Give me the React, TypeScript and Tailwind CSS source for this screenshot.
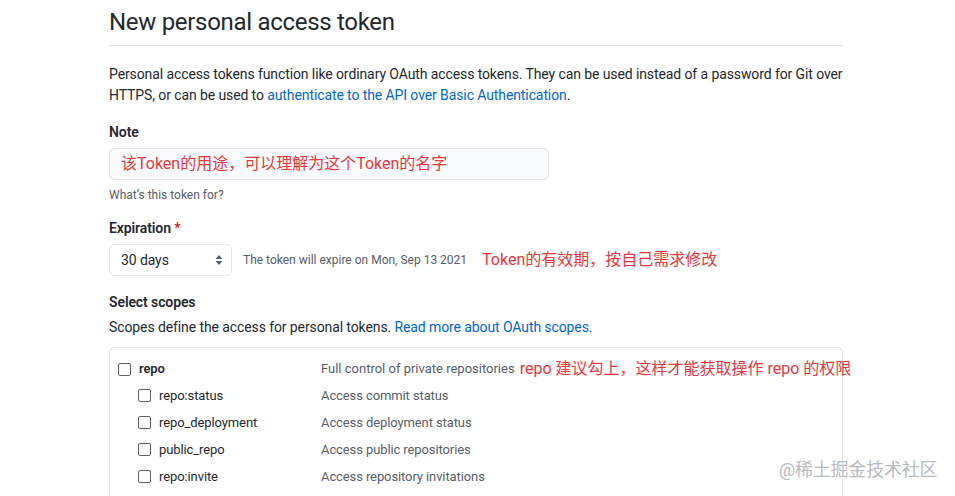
import React from 'react';

const children = [
  { name: 'repo:status', desc: 'Access commit status' },
  { name: 'repo_deployment', desc: 'Access deployment status' },
  { name: 'public_repo', desc: 'Access public repositories' },
  { name: 'repo:invite', desc: 'Access repository invitations' },
  { name: 'security_events', desc: 'Read and write security events' },
];

const Box = () => (
  <span className="inline-block w-[13px] h-[13px] border border-[#5f6368] rounded-[2px] bg-white shrink-0" />
);

export default function App() {
  return (
    <div className="relative w-[955px] h-[496px] overflow-hidden bg-white text-[#24292e] tracking-[-0.1px] font-['Segoe_UI',Roboto,'Noto_Sans_CJK_SC',sans-serif]">
      <div className="ml-[109px] w-[734px]">
        <h1 className="text-[24px] font-normal leading-[30px] tracking-[-0.3px] pt-[7px] pb-[8px] border-b border-[#e1e4e8]">New personal access token</h1>
        <p className="mt-[18px] text-[14px] leading-[21px]">
          Personal access tokens function like ordinary OAuth access tokens. They can be used instead of a password for Git over
          HTTPS, or can be used to <span className="text-[#0366d6]">authenticate to the API over Basic Authentication</span>.
        </p>

        <div className="mt-[16px] text-[14px] font-semibold leading-[20px]">Note</div>
        <div className="mt-[6px] w-[440px] h-[32px] border border-[#e1e4e8] rounded-[6px] bg-[#fafbfc] flex items-center px-[11px]">
          <span className="text-[16px] text-[#e8383d] tracking-normal">该Token的用途，可以理解为这个Token的名字</span>
        </div>
        <div className="mt-[6px] text-[12px] text-[#586069] leading-[18px] tracking-normal">What’s this token for?</div>

        <div className="mt-[14px] text-[14px] font-semibold leading-[20px]">
          Expiration <span className="text-[#cb2431]">*</span>
        </div>
        <div className="mt-[6px] flex items-center">
          <div className="w-[123px] h-[32px] border border-[#e1e4e8] rounded-[6px] flex items-center justify-between pl-[11px] pr-[8px]">
            <span className="text-[14px]">30 days</span>
            <svg width="8" height="12" viewBox="0 0 8 12"><path d="M4 1 L7.5 5 H0.5 Z M4 11 L0.5 7 H7.5 Z" fill="#586069" /></svg>
          </div>
          <span className="ml-[11px] text-[12px] text-[#586069] tracking-normal">The token will expire on Mon, Sep 13 2021</span>
          <span className="ml-[15px] text-[16px] text-[#e8383d] tracking-normal">Token的有效期，按自己需求修改</span>
        </div>

        <div className="mt-[16px] text-[14px] font-semibold leading-[20px]">Select scopes</div>
        <div className="mt-[5px] text-[14px] leading-[21px]">
          Scopes define the access for personal tokens. <span className="text-[#0366d6]">Read more about OAuth scopes.</span>
        </div>

        <div className="mt-[9px] border border-[#e1e4e8] rounded-[6px] pt-[11px]">
          <div className="flex items-center h-[20px] mb-[3px] pl-[8px] whitespace-nowrap">
            <Box />
            <span className="ml-[8px] w-[182px] shrink-0 text-[13px] font-semibold">repo</span>
            <span className="shrink-0 text-[13px] text-[#586069] tracking-normal">Full control of private repositories</span>
            <span className="ml-[5px] shrink-0 text-[16px] text-[#e8383d] tracking-normal">repo 建议勾上，这样才能获取操作 repo 的权限</span>
          </div>
          {children.map((c) => (
            <div key={c.name} className="flex items-center h-[27px] pl-[28px] whitespace-nowrap">
              <Box />
              <span className="ml-[8px] w-[162px] shrink-0 text-[13px]">{c.name}</span>
              <span className="text-[13px] text-[#586069]">{c.desc}</span>
            </div>
          ))}
        </div>
      </div>
      <div className="absolute left-[779px] top-[456px] text-[18px] text-[#b9bcbe] tracking-[-0.2px]">@稀土掘金技术社区</div>
    </div>
  );
}
